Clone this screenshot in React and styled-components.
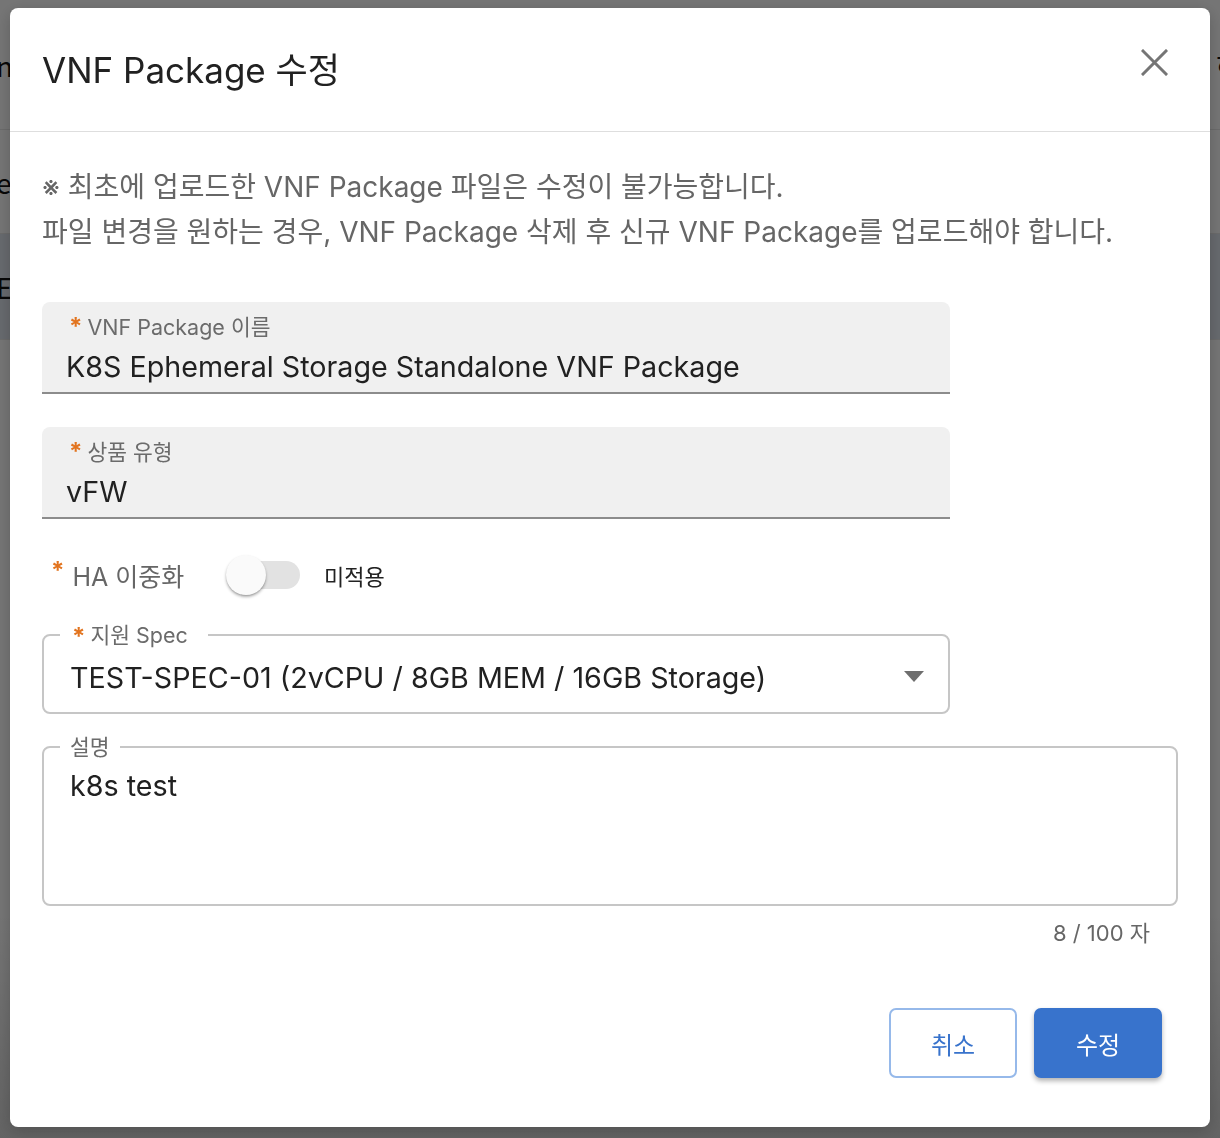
import React from 'react';
import styled, { createGlobalStyle } from 'styled-components';

const GlobalStyle = createGlobalStyle`
  html, body, #root {
    margin: 0;
    padding: 0;
    height: 100%;
  }
  body {
    font-family: Inter, "Noto Sans CJK KR", sans-serif;
    background: #ffffff;
    overflow: hidden;
  }
`

const Page = styled.div`
  height: 100%;
  display: grid;
  grid-template-rows: 130px 104px 106px 1fr;
  background: linear-gradient(#ffffff 0%, #ffffff 80%, #d8d8d8 100%);
`
const PageRow = styled.div`
  display: flex;
  align-items: center;
  justify-content: space-between;
  border-bottom: 1px solid ${props => props.$line || '#e4e4e4'};
  background: ${props => props.$bg || 'transparent'};
  font-size: 28px;
  color: #111;
`
const PageText = styled.span`
  margin-left: -4px;
  margin-right: -22px;
  font-family: "Noto Sans CJK KR", sans-serif;
`

const Overlay = styled.div`
  position: fixed;
  inset: 0;
  background: rgba(0, 0, 0, 0.54);
  padding: 8px 10px;
  box-sizing: border-box;
`
const Dialog = styled.div`
  width: 1200px;
  height: 1119px;
  background: #ffffff;
  border-radius: 8px;
  display: flex;
  flex-direction: column;
  overflow: hidden;
  box-shadow: 0 4px 16px rgba(0, 0, 0, 0.2);
`
const Header = styled.div`
  height: 123px;
  display: flex;
  align-items: center;
  justify-content: space-between;
  padding: 0 41px 0 32px;
  border-bottom: 1px solid #dedede;
  flex-shrink: 0;
`
const Title = styled.h2`
  margin: 0 0 4px 0;
  font-weight: 400;
  font-size: 35px;
  color: #212121;
`
const CloseButton = styled.button`
  border: 0;
  background: transparent;
  padding: 0;
  width: 30px;
  height: 30px;
  margin-bottom: 14px;
  display: flex;
  align-items: center;
  justify-content: center;
  cursor: pointer;
`
const Body = styled.div`
  padding: 33px 32px 0 32px;
  display: flex;
  flex-direction: column;
`
const Notice = styled.p`
  margin: 0 0 47px 0;
  font-size: 28px;
  line-height: 45px;
  color: #666666;
`
const Form = styled.div`
  display: flex;
  flex-direction: column;
  width: 908px;
`
const FilledField = styled.div`
  background: #f0f0f0;
  border-radius: 8px 8px 0 0;
  border-bottom: 2px solid #8c8c8c;
  height: 92px;
  box-sizing: border-box;
  padding: 11px 24px 0 24px;
  margin-bottom: ${props => props.$gap}px;
`
const Label = styled.div`
  font-size: 21.5px;
  line-height: 28px;
  color: #6b6b6b;
  display: flex;
  align-items: center;
`
const Star = styled.span`
  color: #e2741f;
  font-weight: 700;
  font-size: 24px;
  line-height: 20px;
  margin: 0 5px 0 3px;
  align-self: flex-start;
  padding-top: 4px;
`
const Value = styled.div`
  font-size: 28.7px;
  line-height: 44px;
  margin-top: 4px;
  color: #212121;
`
const SwitchRow = styled.div`
  display: flex;
  align-items: center;
  height: 56px;
  margin: 0 0 20px 6px;
`
const SwitchLabel = styled.div`
  font-size: 25px;
  color: #666666;
  width: 182px;
  display: flex;
  align-items: center;
  gap: 3px;
`
const Track = styled.div`
  position: relative;
  width: 70px;
  height: 28px;
  border-radius: 14px;
  background: #e2e2e2;
  margin-right: 24px;
`
const Thumb = styled.div`
  position: absolute;
  left: -4px;
  top: -6px;
  width: 40px;
  height: 40px;
  border-radius: 50%;
  background: #fafafa;
  box-shadow: 0 2px 3px rgba(0, 0, 0, 0.3), 0 1px 1px rgba(0, 0, 0, 0.1);
`
const SwitchText = styled.span`
  font-size: 22px;
  color: #222222;
`
const Outlined = styled.fieldset`
  margin: 0 0 ${props => props.$gap || 0}px 0;
  border: 2px solid #c6c6c6;
  border-radius: 8px;
  padding: 0 26px;
  box-sizing: border-box;
  height: ${props => props.$height}px;
  min-width: 0;
`
const Legend = styled.legend`
  padding: 0 ${props => props.$padRight || 10}px 0 ${props => props.$padLeft || 6}px;
  margin-left: -10px;
  font-size: 21.5px;
  line-height: 24px;
  color: #6b6b6b;
  display: flex;
  align-items: center;
`
const SelectInner = styled.div`
  height: 60px;
  display: flex;
  align-items: center;
  justify-content: space-between;
`
const SelectValue = styled.span`
  font-size: 28.7px;
  color: #212121;
`
const TextValue = styled.div`
  font-size: 28.7px;
  line-height: 40px;
  color: #212121;
  margin-top: 7px;
`
const Counter = styled.div`
  align-self: flex-end;
  font-size: 22px;
  line-height: 28px;
  color: #666666;
  margin: 13px 28px 0 0;
`
const Actions = styled.div`
  display: flex;
  justify-content: flex-end;
  gap: 17px;
  padding: 61px 16px 0 0;
`
const Button = styled.button`
  width: 128px;
  height: 70px;
  border-radius: 7px;
  font-family: "Noto Sans CJK KR", sans-serif;
  font-size: 24px;
  cursor: pointer;
  border: 2px solid ${props => props.$primary ? '#3873cc' : '#96b9ea'};
  background: ${props => props.$primary ? '#3873cc' : '#ffffff'};
  color: ${props => props.$primary ? '#ffffff' : '#3873cc'};
  box-shadow: ${props => props.$primary ? '0 3px 5px rgba(0,0,0,0.3)' : 'none'};
`

const CloseIcon = () => (
  <svg width="27" height="27" viewBox="0 0 27 27">
    <path d="M2 2 L25 25 M25 2 L2 25" stroke="#757575" strokeWidth="3" strokeLinecap="square" />
  </svg>
);

const Caret = () => (
  <svg width="20" height="12" viewBox="0 0 20 12" style={{ marginRight: -2 }}>
    <path d="M0 0 L20 0 L10 11 Z" fill="#6e6e6e" />
  </svg>
);

function App() {
  return (
    <>
      <GlobalStyle />
      <Page>
        <PageRow $line="#e8e8e8"><PageText>n</PageText><PageText>하</PageText></PageRow>
        <PageRow $line="#e8e8e8"><PageText>el</PageText><PageText></PageText></PageRow>
        <PageRow $bg="#e0e6ef" $line="#e8e8e8"><PageText>E</PageText><PageText></PageText></PageRow>
        <div />
      </Page>
      <Overlay>
        <Dialog>
          <Header>
            <Title>VNF Package 수정</Title>
            <CloseButton><CloseIcon /></CloseButton>
          </Header>
          <Body>
            <Notice>
              ※ 최초에 업로드한 VNF Package 파일은 수정이 불가능합니다.<br />
              파일 변경을 원하는 경우, VNF Package 삭제 후 신규 VNF Package를 업로드해야 합니다.
            </Notice>
            <Form>
              <FilledField $gap={33}>
                <Label><Star>*</Star>VNF Package 이름</Label>
                <Value>K8S Ephemeral Storage Standalone VNF Package</Value>
              </FilledField>
              <FilledField $gap={28}>
                <Label><Star>*</Star>상품 유형</Label>
                <Value>vFW</Value>
              </FilledField>
              <SwitchRow>
                <SwitchLabel><Star>*</Star>HA 이중화</SwitchLabel>
                <Track><Thumb /></Track>
                <SwitchText>미적용</SwitchText>
              </SwitchRow>
              <Outlined $height={91} $gap={21}>
                <Legend $padLeft={9} $padRight={20}><Star>*</Star>지원 Spec</Legend>
                <SelectInner>
                  <SelectValue>TEST-SPEC-01 (2vCPU / 8GB MEM / 16GB Storage)</SelectValue>
                  <Caret />
                </SelectInner>
              </Outlined>
            </Form>
            <Outlined $height={171}>
              <Legend $padLeft={10}>설명</Legend>
              <TextValue>k8s test</TextValue>
            </Outlined>
            <Counter>8 / 100 자</Counter>
            <Actions>
              <Button>취소</Button>
              <Button $primary>수정</Button>
            </Actions>
          </Body>
        </Dialog>
      </Overlay>
    </>
  );
}

export default App;
